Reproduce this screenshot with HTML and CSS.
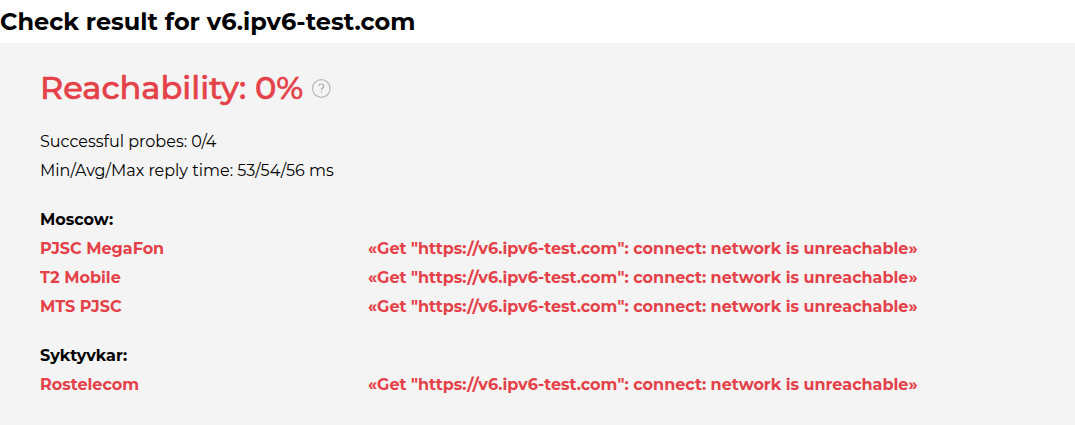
FILE: index.html
```html
<!DOCTYPE html>
<html lang="en">
<head>
<meta charset="utf-8">
<title>Check result</title>
<link rel="stylesheet" href="styles.css">
</head>
<body>
<h1 class="title">Check result for v6.ipv6-test.com</h1>
<main class="panel">
<h2 class="reach"><span class="reach-text">Reachability: 0%</span>
<svg class="help" viewBox="0 0 20 20" width="20" height="20"><circle cx="10.300" cy="10.500" r="8.800"/><path class="mark" d="M8 7.900C8.200 6.700 9.100 6 10.400 6c1.500 0 2.400.8 2.400 2 0 1.700-2.300 1.900-2.300 4M10.500 13.300v1.300"/></svg></h2>
<div class="stats">
<p class="row">Successful probes: 0/4</p>
<p class="row">Min/Avg/Max reply time: 53/54/56 ms</p>
</div>
<section class="city">
<h3 class="row">Moscow:</h3>
<div class="row probe"><span>PJSC MegaFon</span><span>«Get "https://v6.ipv6-test.com": connect: network is unreachable»</span></div>
<div class="row probe"><span>T2 Mobile</span><span>«Get "https://v6.ipv6-test.com": connect: network is unreachable»</span></div>
<div class="row probe"><span>MTS PJSC</span><span>«Get "https://v6.ipv6-test.com": connect: network is unreachable»</span></div>
</section>
<section class="city">
<h3 class="row">Syktyvkar:</h3>
<div class="row probe"><span>Rostelecom</span><span>«Get "https://v6.ipv6-test.com": connect: network is unreachable»</span></div>
</section>
</main>
</body>
</html>
```
FILE: styles.css
```css
* { box-sizing: border-box; }
body { margin: 0; background: #fff; color: #000; font-family: Montserrat, "Open Sans", sans-serif; font-size: 16px; }
h1, h2, h3, p { margin: 0; }
.title { height: 43px; font-size: 24px; line-height: 43px; font-weight: 700; white-space: nowrap; }
.panel { min-height: 382px; padding: 25px 40px 10px; background: #f4f4f4; }
.reach { display: flex; align-items: center; gap: 8px; height: 40px; color: #e44148; font-size: 32px; line-height: 38px; font-weight: 500; white-space: nowrap; }
.reach-text { -webkit-text-stroke: 0.6px #e44148; }
.help { fill: none; stroke: #b8b8b8; stroke-width: 1.2; }
.mark { stroke: #a8a8a8; }
.stats { margin: 19px 0 20px; }
.row { height: 29px; line-height: 29px; font-size: 16px; white-space: nowrap; }
.city { margin-bottom: 20px; font-weight: 700; }
.probe { display: grid; grid-template-columns: 328px 1fr; color: #e44148; }
```
